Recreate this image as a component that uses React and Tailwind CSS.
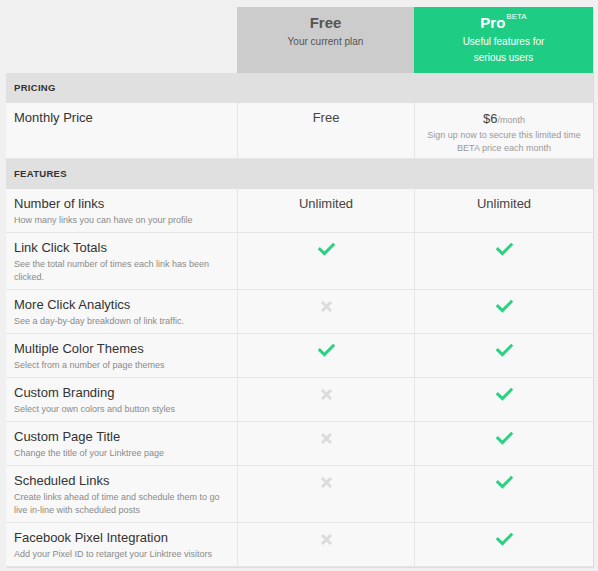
import React from "react";

const features = [
  {
    title: "Number of links",
    desc: "How many links you can have on your profile",
    free: "Unlimited",
    pro: "Unlimited",
  },
  {
    title: "Link Click Totals",
    desc: "See the total number of times each link has been clicked.",
    free: true,
    pro: true,
  },
  {
    title: "More Click Analytics",
    desc: "See a day-by-day breakdown of link traffic.",
    free: false,
    pro: true,
  },
  {
    title: "Multiple Color Themes",
    desc: "Select from a number of page themes",
    free: true,
    pro: true,
  },
  {
    title: "Custom Branding",
    desc: "Select your own colors and button styles",
    free: false,
    pro: true,
  },
  {
    title: "Custom Page Title",
    desc: "Change the title of your Linktree page",
    free: false,
    pro: true,
  },
  {
    title: "Scheduled Links",
    desc: "Create links ahead of time and schedule them to go live in-line with scheduled posts",
    free: false,
    pro: true,
  },
  {
    title: "Facebook Pixel Integration",
    desc: "Add your Pixel ID to retarget your Linktree visitors",
    free: false,
    pro: true,
  },
];

function Check() {
  return (
    <svg width="17" height="13" viewBox="0 0 17 13" className="mx-auto">
      <path
        d="M1.8 6.2 L6.4 10.6 L15.2 1.8"
        fill="none"
        stroke="#2bd083"
        strokeWidth="3"
        strokeLinecap="square"
      />
    </svg>
  );
}

function Cross() {
  return (
    <svg width="13" height="13" viewBox="0 0 13 13" className="mx-auto">
      <path
        d="M2 2 L11 11 M11 2 L2 11"
        fill="none"
        stroke="#dcdcdc"
        strokeWidth="3"
      />
    </svg>
  );
}

function Value({ v }) {
  if (v === true) return <div className="pt-[3px]"><Check /></div>;
  if (v === false) return <div className="pt-[3px]"><Cross /></div>;
  return <div className="text-[13px] leading-4 text-[#444]">{v}</div>;
}

function Section({ label }) {
  return (
    <div className="col-span-3 h-[30px] bg-[#e0e0e0] px-2 flex items-center text-[9.5px] font-bold tracking-[0.3px] text-[#333]">
      {label}
    </div>
  );
}

export default function App() {
  return (
    <div
      className="min-h-[571px] w-[598px] bg-[#f0f0f0] pt-[7px]"
      style={{ fontFamily: "'Liberation Sans', Arial, sans-serif" }}
    >
      <div className="ml-[6px] w-[587px] grid grid-cols-[231px_177px_179px] shadow-[1px_1px_0_#dcdcdc]">
        <div />
        <div className="h-[66px] bg-[#cccccc] text-center pt-[6px]">
          <div className="text-[15px] font-bold leading-5 text-[#555]">Free</div>
          <div className="text-[10px] leading-4 text-[#555] mt-[1px]">Your current plan</div>
        </div>
        <div className="h-[66px] bg-[#1ecd83] text-center pt-[6px] text-white">
          <div className="text-[15px] font-bold leading-5">
            Pro<sup className="text-[8px] font-normal ml-[1px] align-[5px]">BETA</sup>
          </div>
          <div className="text-[10px] leading-4 mt-[1px]">
            Useful features for
            <br />
            serious users
          </div>
        </div>

        <Section label="PRICING" />

        <div className="bg-[#f8f8f8] border-b border-[#e6e6e6] h-[56px] px-2 pt-[7px] text-[13px] leading-4 text-[#333]">
          Monthly Price
        </div>
        <div className="bg-[#f8f8f8] border-b border-l border-[#e6e6e6] pt-[7px] text-center text-[13px] leading-4 text-[#444]">
          Free
        </div>
        <div className="bg-[#f8f8f8] border-b border-l border-[#e6e6e6] pt-[8px] text-center text-[#444]">
          <div className="text-[13px] leading-4">
            $6<span className="text-[9px] text-[#999]">/month</span>
          </div>
          <div className="text-[9px] leading-[13px] text-[#999] px-1 mt-[1px]">
            Sign up now to secure this limited time
            <br />
            BETA price each month
          </div>
        </div>

        <Section label="FEATURES" />

        {features.map((f) => (
          <React.Fragment key={f.title}>
            <div className="bg-[#f8f8f8] border-b border-[#e6e6e6] pl-2 pr-4 pt-[7px] pb-[5px]">
              <div className="text-[13px] leading-4 text-[#333]">{f.title}</div>
              <div className="text-[9px] leading-[13px] text-[#8a8a8a] mt-[2px]">{f.desc}</div>
            </div>
            <div className="bg-[#f8f8f8] border-b border-l border-[#e6e6e6] pt-[7px] text-center">
              <Value v={f.free} />
            </div>
            <div className="bg-[#f8f8f8] border-b border-l border-[#e6e6e6] pt-[7px] text-center">
              <Value v={f.pro} />
            </div>
          </React.Fragment>
        ))}
      </div>
    </div>
  );
}
